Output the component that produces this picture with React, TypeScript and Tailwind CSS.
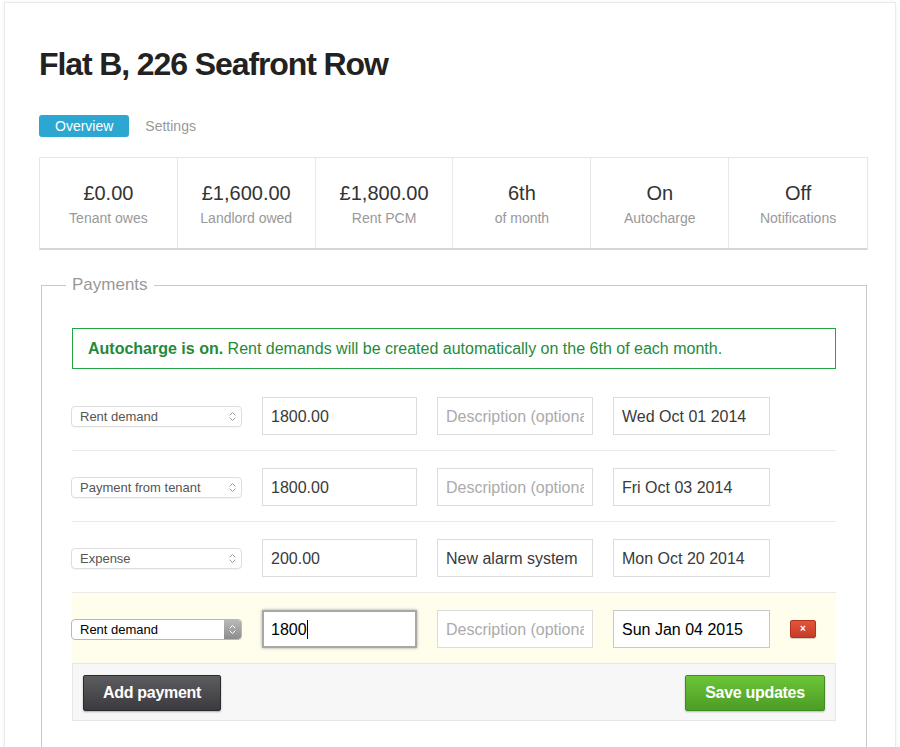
import React from 'react'

type Row = {
  kind: string
  amount: string
  description?: string
  date: string
  active?: boolean
}

const stats = [
  { value: '£0.00', label: 'Tenant owes' },
  { value: '£1,600.00', label: 'Landlord owed' },
  { value: '£1,800.00', label: 'Rent PCM' },
  { value: '6th', label: 'of month' },
  { value: 'On', label: 'Autocharge' },
  { value: 'Off', label: 'Notifications' },
]

const rows: Row[] = [
  { kind: 'Rent demand', amount: '1800.00', date: 'Wed Oct 01 2014' },
  { kind: 'Payment from tenant', amount: '1800.00', date: 'Fri Oct 03 2014' },
  { kind: 'Expense', amount: '200.00', description: 'New alarm system', date: 'Mon Oct 20 2014' },
  { kind: 'Rent demand', amount: '1800', date: 'Sun Jan 04 2015', active: true },
]

const Chevrons = ({ color }: { color: string }) => (
  <svg width="7" height="11" viewBox="0 0 7 11" fill="none">
    <path d="M1 4 L3.5 1.5 L6 4" stroke={color} strokeWidth="1" strokeLinecap="round" strokeLinejoin="round" />
    <path d="M1 7 L3.5 9.5 L6 7" stroke={color} strokeWidth="1" strokeLinecap="round" strokeLinejoin="round" />
  </svg>
)

const SelectBox = ({ label, active }: { label: string; active?: boolean }) => {
  if (active) {
    return (
      <div className="-ml-px w-[171px] h-[21px] flex items-stretch bg-white border border-[#b8b8b8] rounded-[4px] overflow-hidden">
        <div className="flex-1 pl-[8px] text-[13px] leading-[19px] text-black">{label}</div>
        <div className="w-[17px] flex items-center justify-center bg-gradient-to-b from-[#b9b9b9] to-[#8c8c8c]">
          <Chevrons color="#ffffff" />
        </div>
      </div>
    )
  }
  return (
    <div className="-ml-px w-[171px] h-[21px] flex items-center justify-between bg-white border border-[#dedede] rounded-[4px] pl-[8px] pr-[5px] shadow-[0_1px_1px_rgba(0,0,0,0.04)]">
      <span className="text-[13px] leading-[19px] text-[#555]">{label}</span>
      <Chevrons color="#9a9a9a" />
    </div>
  )
}

const Field = ({
  value,
  placeholder,
  width,
  focused,
  dark,
}: {
  value?: string
  placeholder?: string
  width: string
  focused?: boolean
  dark?: boolean
}) => (
  <div
    className={`${width} h-[38px] bg-white px-[8px] pt-px flex items-center ${
      focused
        ? 'border-2 border-[#a8a8a8] shadow-[0_0_3px_rgba(0,0,0,0.35)] pl-[7px]'
        : dark
        ? 'border border-[#c8c8c8]'
        : 'border border-[#dcdcdc]'
    }`}
  >
    <div className="w-full overflow-hidden whitespace-nowrap text-[16px] leading-[20px]">
      {value ? (
        <span className={dark || focused ? 'text-black' : 'text-[#3a3a3a]'}>
          {value}
          {focused && <span className="inline-block w-px h-[19px] bg-black align-[-4px]"></span>}
        </span>
      ) : (
        <span className="text-[#ababab]">{placeholder}</span>
      )}
    </div>
  </div>
)

const App = () => {
  return (
    <div className="min-h-[747px] bg-white" style={{ fontFamily: '"Liberation Sans", Arial, sans-serif' }}>
      <div className="ml-[4px] mt-[2px] w-[892px] bg-white border border-[#ebebeb] shadow-[0_0_3px_rgba(0,0,0,0.07)] pl-[34px] pt-[41px] pb-[60px]">

        {/* Title */}
        <h1 className="text-[32px] leading-[40px] font-bold tracking-[-1.1px] text-[#222]">
          Flat B, 226 Seafront Row
        </h1>

        {/* Tabs */}
        <div className="mt-[31px] flex items-center">
          <span className="h-[22px] px-[16px] rounded-[3px] bg-[#2ba7d2] text-white text-[14px] leading-[22px]">
            Overview
          </span>
          <span className="ml-[16px] text-[14px] leading-[22px] text-[#999]">Settings</span>
        </div>

        {/* Stats */}
        <div className="mt-[20px] w-[829px] grid grid-cols-6 border border-[#e6e6e6] border-b-2 border-b-[#d6d6d6] divide-x divide-[#e8e8e8]">
          {stats.map((s) => (
            <div key={s.label} className="pt-[23px] pb-[20px] text-center">
              <div className="text-[20px] leading-[24px] text-[#333]">{s.value}</div>
              <div className="mt-[3px] text-[14px] leading-[20px] text-[#999]">{s.label}</div>
            </div>
          ))}
        </div>

        {/* Payments */}
        <fieldset className="mt-[24px] ml-[2px] w-[826px] border border-[#c9c9c9] px-[30px] pt-[32px] pb-[40px]">
          <legend className="ml-[-6px] px-[6px] text-[17px] leading-[22px] text-[#999]">Payments</legend>

          <div className="h-[41px] border border-[#22a447] pl-[15px] flex items-center text-[16px] text-[#1f8b3b]">
            <span className="font-bold">Autocharge is on.</span>
            <span>&nbsp;Rent demands will be created automatically on the 6th of each month.</span>
          </div>

          <div className="mt-[11px]">
            {rows.map((r, i) => (
              <div
                key={i}
                className={`flex items-center gap-5 pt-[17px] pb-[15px] ${
                  r.active ? 'bg-[#fffdeb]' : 'border-b border-[#e9e9e9]'
                }`}
              >
                <SelectBox label={r.kind} active={r.active} />
                <Field width="w-[155px]" value={r.amount} focused={r.active} />
                <Field width="w-[156px]" value={r.description} placeholder="Description (optional)" />
                <Field width="w-[157px]" value={r.date} dark={r.active} />
                {r.active && (
                  <button className="w-[26px] h-[18px] rounded-[2px] border border-[#b1361f] bg-gradient-to-b from-[#e2553c] to-[#c63b27] shadow-[0_1px_1px_rgba(0,0,0,0.2)] flex items-center justify-center">
                    <span className="text-white text-[10px] leading-none font-bold">×</span>
                  </button>
                )}
              </div>
            ))}
          </div>

          {/* Footer actions */}
          <div className="border border-[#e6e6e6] bg-[#f7f7f7] pl-[10px] pr-[10px] pt-[11px] pb-[9px] flex items-center justify-between">
            <button className="w-[138px] h-[36px] rounded-[2px] border border-[#2a2a2c] bg-gradient-to-b from-[#5d5d61] to-[#3b3b3f] shadow-[0_1px_2px_rgba(0,0,0,0.3)] text-white text-[16px] font-bold tracking-[-0.3px]">
              Add payment
            </button>
            <button className="w-[140px] h-[36px] rounded-[2px] border border-[#3f8c20] bg-gradient-to-b from-[#6cc537] to-[#4c9d25] shadow-[0_1px_2px_rgba(0,0,0,0.25)] text-white text-[16px] font-bold tracking-[-0.3px]">
              Save updates
            </button>
          </div>
        </fieldset>
      </div>
    </div>
  )
}

export default App
